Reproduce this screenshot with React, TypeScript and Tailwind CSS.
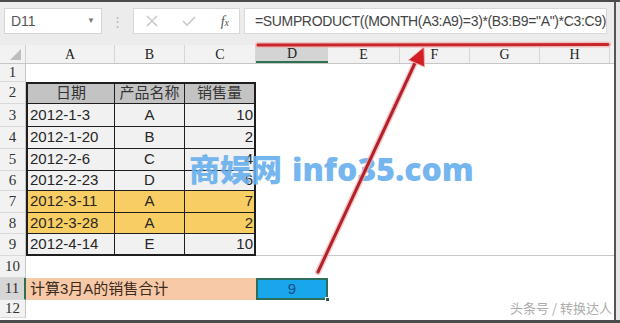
import React from 'react';

const COLS = [
  { key: 'A', w: 'w-[89px]' },
  { key: 'B', w: 'w-[70px]' },
  { key: 'C', w: 'w-[71px]' },
  { key: 'D', w: 'w-[72px]' },
  { key: 'E', w: 'w-[72px]' },
  { key: 'F', w: 'w-[70px]' },
  { key: 'G', w: 'w-[70px]' },
  { key: 'H', w: 'w-[70px]' },
];

const ROW_H: Record<number, string> = {
  1: 'h-[18px]',
  2: 'h-[22px]',
  3: 'h-[23px]',
  4: 'h-[22px]',
  5: 'h-[22px]',
  6: 'h-[20px]',
  7: 'h-[22px]',
  8: 'h-[21px]',
  9: 'h-[22px]',
  10: 'h-[22px]',
  11: 'h-[22px]',
  12: 'h-[18px]',
};

const DATA = [
  { date: '2012-1-3', name: 'A', qty: '10', hi: false },
  { date: '2012-1-20', name: 'B', qty: '2', hi: false },
  { date: '2012-2-6', name: 'C', qty: '4', hi: false },
  { date: '2012-2-23', name: 'D', qty: '6', hi: false },
  { date: '2012-3-11', name: 'A', qty: '7', hi: true },
  { date: '2012-3-28', name: 'A', qty: '2', hi: true },
  { date: '2012-4-14', name: 'E', qty: '10', hi: false },
];

const cellFont = "font-['Liberation_Sans','Noto_Sans_CJK_SC',sans-serif]";

function RowHeader({ n, active }: { n: number; active?: boolean }) {
  return (
    <div
      className={`w-[26px] shrink-0 flex items-center justify-center border-b border-[#d9d9d9] font-['Liberation_Serif',serif] text-[15px] text-[#333] ${
        active ? 'bg-[#d6d6d6] border-r-2 border-r-[#2e7050]' : 'bg-[#f2f2f2] border-r border-r-[#c6c6c6]'
      }`}
    >
      {n}
    </div>
  );
}

function EmptyCells({ from, line }: { from: number; line?: boolean }) {
  return (
    <>
      {COLS.slice(from).map((c) => (
        <div key={c.key} className={`${c.w} shrink-0 ${line ? 'border-b border-[#c8c8c8]' : ''}`} />
      ))}
      <div className={`flex-1 ${line ? 'border-b border-[#c8c8c8]' : ''}`} />
    </>
  );
}

export default function App() {
  return (
    <div className="relative w-[620px] h-[323px] overflow-hidden bg-white border-t-2 border-b-[3px] border-[#4b4b4b]">
      <div className="flex h-full">
        <div className="w-[616px] shrink-0 flex flex-col border-r-2 border-[#555]">
          {/* toolbar */}
          <div className="h-[43px] bg-[#ececec] flex items-center gap-0 pt-[1px] pb-[6px]">
            <div className="ml-[4px] w-[98px] h-[26px] bg-white border border-[#d4d4d4] flex items-center justify-between px-[6px] font-['Liberation_Sans',sans-serif] text-[14px] text-[#555]">
              <span>D11</span>
              <span className="text-[8px] text-[#777]">▼</span>
            </div>
            <div className="w-[31px] flex justify-center text-[#b8b8b8] text-[13px] leading-none">⋮</div>
            <div className="w-[107px] h-[26px] bg-white border border-[#d8d8d8] flex items-center justify-between pl-[12px] pr-[10px]">
              <svg width="12" height="12" viewBox="0 0 12 12">
                <path d="M1 1 L11 11 M11 1 L1 11" stroke="#c9c9c9" strokeWidth="1.6" />
              </svg>
              <svg width="14" height="12" viewBox="0 0 14 12">
                <path d="M1 6 L5 10 L13 2" stroke="#c9c9c9" strokeWidth="1.6" fill="none" />
              </svg>
              <span className="font-['Liberation_Serif',serif] italic text-[14px] text-[#555]">
                f<span className="text-[10px]">x</span>
              </span>
            </div>
            <div className="ml-[4px] w-[363px] h-[26px] bg-white border border-[#d8d8d8] flex items-center pl-[10px] font-['Liberation_Sans',sans-serif] text-[14px] tracking-[-0.35px] text-[#444] whitespace-nowrap overflow-hidden">
              =SUMPRODUCT((MONTH(A3:A9)=3)*(B3:B9="A")*C3:C9)
            </div>
          </div>

          {/* column header */}
          <div className="flex h-[19px] bg-[#f2f2f2] border-b border-[#c6c6c6]">
            <div className="w-[26px] shrink-0 relative border-r border-[#d0d0d0]">
              <svg className="absolute right-[4px] bottom-[3px]" width="11" height="11" viewBox="0 0 11 11">
                <path d="M11 0 L11 11 L0 11 Z" fill="#bdbdbd" />
              </svg>
            </div>
            {COLS.map((c) => (
              <div
                key={c.key}
                className={`${c.w} shrink-0 flex items-center justify-center font-['Liberation_Serif',serif] text-[14px] text-[#222] ${
                  c.key === 'D'
                    ? 'bg-[#d4d4d4] border-b-2 border-[#2e7050]'
                    : 'border-r border-[#d6d6d6]'
                }`}
              >
                {c.key}
              </div>
            ))}
            <div className="flex-1" />
          </div>

          {/* rows */}
          <div className={`flex ${ROW_H[1]}`}>
            <RowHeader n={1} />
            <EmptyCells from={0} />
          </div>

          <div className={`flex ${ROW_H[2]} ${cellFont} text-[15px] text-[#333]`}>
            <RowHeader n={2} />
            <div className="w-[89px] shrink-0 bg-[#c3c3c3] border-2 border-r border-b border-[#1e1e1e] flex items-center justify-center">日期</div>
            <div className="w-[70px] shrink-0 bg-[#c3c3c3] border-t-2 border-r border-b border-[#1e1e1e] flex items-center justify-center">产品名称</div>
            <div className="w-[71px] shrink-0 bg-[#c3c3c3] border-t-2 border-r-2 border-b border-[#1e1e1e] flex items-center justify-center">销售量</div>
            <EmptyCells from={3} />
          </div>

          {DATA.map((d, i) => {
            const n = i + 3;
            const last = n === 9;
            const bg = d.hi ? 'bg-[#f8cd63]' : 'bg-[#f1f1f1]';
            const bb = last ? 'border-b-2' : 'border-b';
            return (
              <div key={n} className={`flex ${ROW_H[n]} ${cellFont} text-[15px] text-[#262626]`}>
                <RowHeader n={n} />
                <div className={`w-[89px] shrink-0 ${bg} border-l-2 border-r ${bb} border-[#1e1e1e] flex items-center pl-[2px]`}>{d.date}</div>
                <div className={`w-[70px] shrink-0 ${bg} border-r ${bb} border-[#1e1e1e] flex items-center justify-center`}>{d.name}</div>
                <div className={`w-[71px] shrink-0 ${bg} border-r-2 ${bb} border-[#1e1e1e] flex items-center justify-end pr-[1px]`}>{d.qty}</div>
                <EmptyCells from={3} line={last} />
              </div>
            );
          })}

          <div className={`flex ${ROW_H[10]}`}>
            <RowHeader n={10} />
            <EmptyCells from={0} />
          </div>

          <div className={`flex ${ROW_H[11]} ${cellFont} text-[15px] text-[#3a2a20]`}>
            <RowHeader n={11} active />
            <div className="w-[230px] shrink-0 bg-[#f8c9a6] flex items-center pl-[4px]">计算3月A的销售合计</div>
            <div className="w-[72px] shrink-0 relative bg-[#17a7ea] border-2 border-[#2d6d5c] flex items-center justify-center text-[#1d4e87]">
              9
              <div className="absolute right-[-4px] bottom-[-4px] w-[5px] h-[5px] bg-[#2d5a4c] border border-white" />
            </div>
            <EmptyCells from={4} />
          </div>

          <div className={`flex ${ROW_H[12]}`}>
            <RowHeader n={12} />
            <EmptyCells from={0} />
          </div>
          <div className="flex-1" />
        </div>
        <div className="flex-1 bg-[#e6e6e6]" />
      </div>

      {/* watermark */}
      <div className="absolute left-[189px] top-[150px] leading-none whitespace-nowrap text-[#68afee] opacity-90">
        <span className="font-['Noto_Sans_CJK_SC',sans-serif] font-black text-[31px]">商娱网</span>
        <span className="font-['Open_Sans',sans-serif] font-extrabold text-[32px] ml-[10px]">info35.com</span>
      </div>

      {/* annotation arrow */}
      <svg className="absolute left-0 top-0 pointer-events-none" width="620" height="323" viewBox="0 0 620 323">
        <line x1="258" y1="43" x2="608" y2="42.5" stroke="#f2b3b3" strokeWidth="6" strokeLinecap="round" opacity="0.7" />
        <line x1="258" y1="43" x2="608" y2="42.5" stroke="#c8262c" strokeWidth="3" strokeLinecap="round" />
        <line x1="318" y1="270" x2="415" y2="61" stroke="#f2b3b3" strokeWidth="6" strokeLinecap="round" opacity="0.7" />
        <line x1="318" y1="270" x2="415" y2="61" stroke="#b3222b" strokeWidth="3" strokeLinecap="round" />
        <path d="M424 45 L424.5 65 L408.5 58 Z" fill="#d21f26" stroke="#f3b0b0" strokeWidth="1" />
      </svg>

      {/* footer watermark */}
      <div className="absolute right-[8px] bottom-[6px] font-['Noto_Sans_CJK_SC',sans-serif] text-[13px] text-[#acacac] leading-none">
        头条号 / 转换达人
      </div>
    </div>
  );
}
